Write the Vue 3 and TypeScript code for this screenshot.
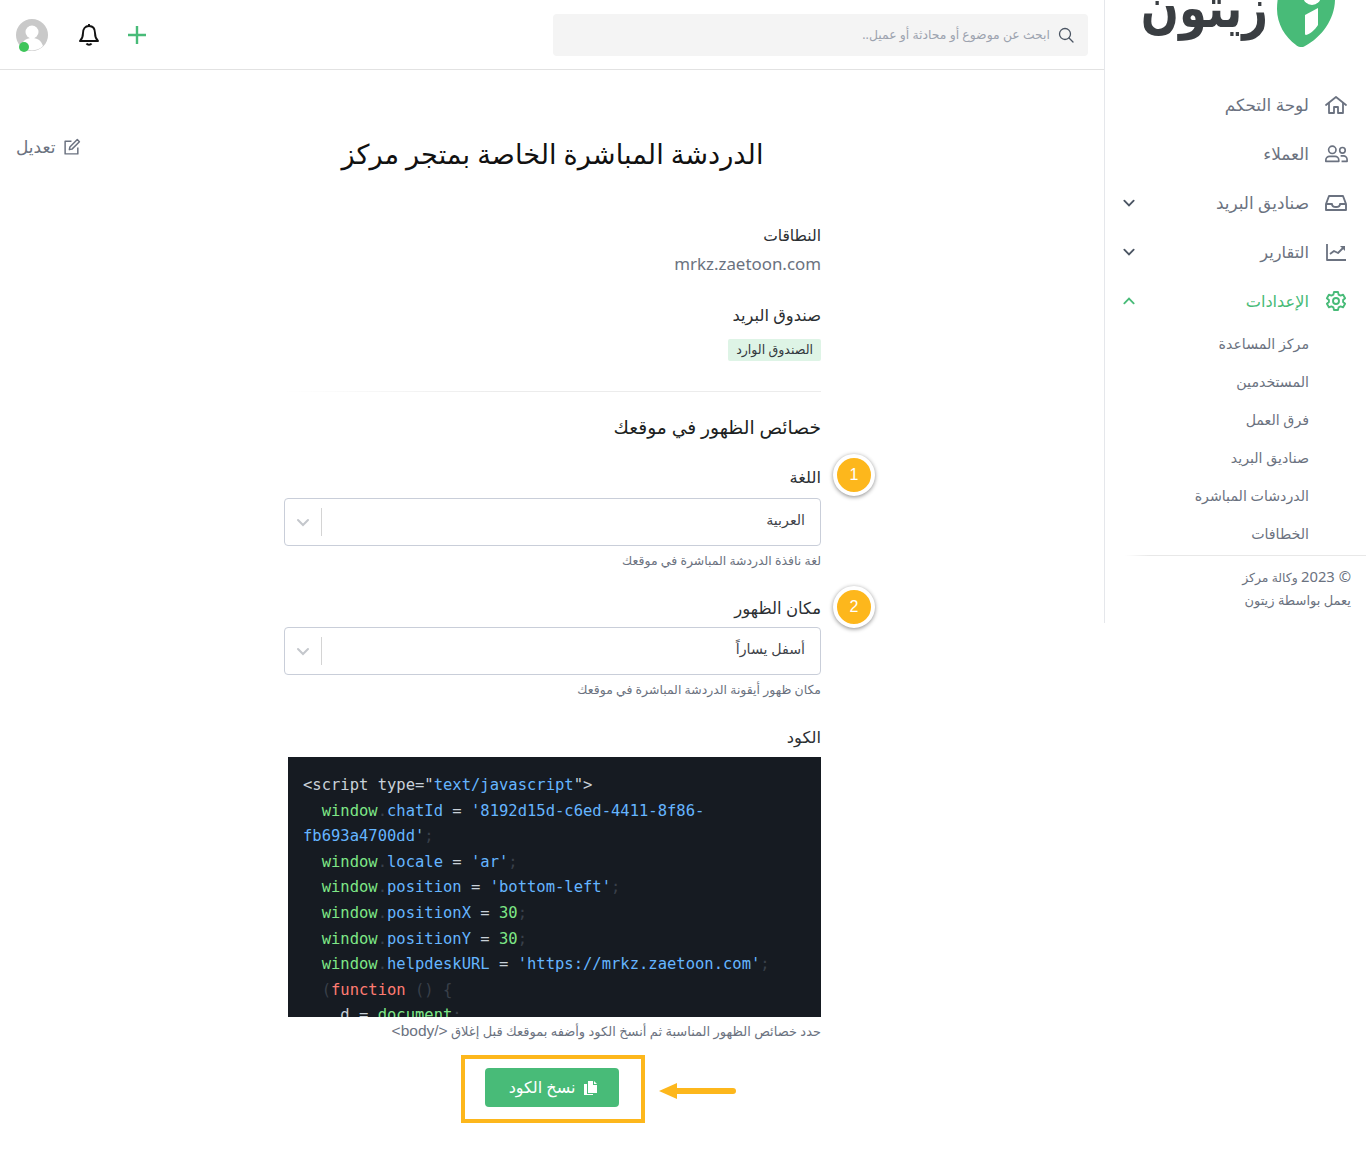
<script setup lang="ts">
type Tok = [string, string]
const code: Tok[][] = [
  [['t', '<script type='], ['w', '"'], ['s', 'text/javascript'], ['w', '"'], ['t', '>']],
  [['t', '  '], ['g', 'window'], ['d', '.'], ['s', 'chatId'], ['t', ' = '], ['s', "'8192d15d-c6ed-4411-8f86-fb693a4700dd'"], ['d', ';']],
  [['t', '  '], ['g', 'window'], ['d', '.'], ['s', 'locale'], ['t', ' = '], ['s', "'ar'"], ['d', ';']],
  [['t', '  '], ['g', 'window'], ['d', '.'], ['s', 'position'], ['t', ' = '], ['s', "'bottom-left'"], ['d', ';']],
  [['t', '  '], ['g', 'window'], ['d', '.'], ['s', 'positionX'], ['t', ' = '], ['g', '30'], ['d', ';']],
  [['t', '  '], ['g', 'window'], ['d', '.'], ['s', 'positionY'], ['t', ' = '], ['g', '30'], ['d', ';']],
  [['t', '  '], ['g', 'window'], ['d', '.'], ['s', 'helpdeskURL'], ['t', ' = '], ['s', "'https://mrkz.zaetoon.com'"], ['d', ';']],
  [['t', '  '], ['d', '('], ['r', 'function'], ['d', ' () {']],
  [['t', '    d = '], ['g', 'document'], ['d', ';']],
]
const subItems = ['مركز المساعدة', 'المستخدمين', 'فرق العمل', 'صناديق البريد', 'الدردشات المباشرة', 'الخطافات']
</script>

<template>
  <div class="page" dir="rtl">
    <aside class="side">
      <div class="logo">
        <svg class="logo-mark" width="58" height="78" viewBox="0 0 58 78">
          <path d="M29 0C45 0 58 13 58 30C58 50 45 68 28 77C25 79 21 78 19 76C8 68 0 55 0 40C0 15 13 0 29 0Z" fill="#48bb78" />
          <path d="M28 46 41 39V56C38 61 33 65 29 66C28 66 28 65 28 64Z" fill="#fff" />
          <circle cx="35" cy="27" r="9" fill="#fff" />
        </svg>
        <span class="logo-text">زيتون</span>
      </div>
      <nav class="nav">
        <a class="nav-item">
          <svg class="ic" viewBox="0 0 24 24" fill="none" stroke="currentColor" stroke-width="1.800" stroke-linejoin="round" stroke-linecap="round"><path d="M2 12 12 4l10 8" /><path d="M5 10v10h5v-6h4v6h5V10" /></svg>
          <span>لوحة التحكم</span>
        </a>
        <a class="nav-item">
          <svg class="ic" viewBox="0 0 26 24" fill="none" stroke="currentColor" stroke-width="1.800" stroke-linejoin="round"><circle cx="9" cy="7.500" r="4" /><path d="M2 20v-1.500c0-2.500 2-4 4-4h6c2 0 4 1.500 4 4V20Z" /><circle cx="20" cy="8" r="3" /><path d="M18 14h3c2 0 4 1.500 4 4v2h-6" /></svg>
          <span>العملاء</span>
        </a>
        <a class="nav-item">
          <svg class="ic" viewBox="0 0 24 24" fill="none" stroke="currentColor" stroke-width="1.900" stroke-linejoin="round"><path d="M5 5h14l3 8v6H2v-6Z" /><path d="M2 13h6c0 2 2 3 4 3s4-1 4-3h6" /></svg>
          <span>صناديق البريد</span>
          <svg class="chev" viewBox="0 0 12 12" fill="none" stroke="currentColor" stroke-width="1.600" stroke-linecap="round"><path d="m2 4 4 4 4-4" /></svg>
        </a>
        <a class="nav-item narrow">
          <svg class="ic" viewBox="0 0 24 24" fill="none" stroke="currentColor" stroke-width="1.800" stroke-linejoin="round"><path d="M3 4v16h19" /><path d="m6 14 4-3 4 2 5-5" /><path d="M16 6h5v5Z" fill="currentColor" stroke="none" /></svg>
          <span>التقارير</span>
          <svg class="chev" viewBox="0 0 12 12" fill="none" stroke="currentColor" stroke-width="1.600" stroke-linecap="round"><path d="m2 4 4 4 4-4" /></svg>
        </a>
        <a class="nav-item narrow active">
          <svg class="ic" viewBox="0 0 24 24" fill="none" stroke="currentColor" stroke-width="1.900" stroke-linejoin="round"><path d="M10 3h4l.6 2.600 2 1 2.500-.9 2 3.500-2 1.800v2l2 1.800-2 3.500-2.500-.9-2 1L14 21h-4l-.6-2.600-2-1-2.500.9-2-3.500 2-1.800v-2l-2-1.800 2-3.500 2.500.9 2-1Z" /><circle cx="12" cy="12" r="3" /></svg>
          <span>الإعدادات</span>
          <svg class="chev" viewBox="0 0 12 12" fill="none" stroke="currentColor" stroke-width="1.600" stroke-linecap="round"><path d="m2 8 4-4 4 4" /></svg>
        </a>
        <div class="sub">
          <a v-for="s in subItems" :key="s" class="sub-item">{{ s }}</a>
        </div>
      </nav>
      <div class="side-foot">
        <div class="foot-1"><span class="year">© 2023</span> وكالة مركز</div>
        <div class="foot-2">يعمل بواسطة زيتون</div>
      </div>
    </aside>

    <main class="main">
      <header class="top">
        <div class="search">
          <svg width="16" height="16" viewBox="0 0 16 16" fill="none" stroke="#4b5563" stroke-width="1.300"><circle cx="7" cy="7" r="5.500" /><path d="m11 11 4 4" stroke-linecap="round" /></svg>
          <span>ابحث عن موضوع أو محادثة أو عميل..</span>
        </div>
        <div class="tools">
          <svg class="plus" width="18" height="18" viewBox="0 0 18 18" stroke="#48bb78" stroke-width="2.400"><path d="M9 0v18M0 9h18" /></svg>
          <svg width="22" height="24" viewBox="0 0 22 24" fill="none" stroke="#111" stroke-width="1.900" stroke-linejoin="round"><path d="M11 3c-4 0-6 3-6 7 0 4-1 6-3 8h18c-2-2-3-4-3-8 0-4-2-7-6-7Z" /><path d="M11 1v2" /><path d="M8.500 20.500c1 1.600 4 1.600 5 0" stroke-width="2" /></svg>
          <div class="avatar">
            <svg width="32" height="32" viewBox="0 0 32 32"><circle cx="16" cy="16" r="16" fill="#c9c9c9" /><circle cx="16" cy="13" r="6.500" fill="#fff" /><path d="M5 27c2-6 6-8 11-8s9 2 11 8a16 16 0 0 1-22 0Z" fill="#fff" /></svg>
            <i class="online"></i>
          </div>
        </div>
      </header>

      <section class="content">
        <div class="head">
          <span></span>
          <h1>الدردشة المباشرة الخاصة بمتجر مركز</h1>
          <a class="edit">
            <svg width="18" height="18" viewBox="0 0 17 17" fill="none" stroke="#6b7280" stroke-width="1.400" stroke-linejoin="round"><path d="M8 3H2v12h12V9" /><path d="m6.500 8.500 7-7 2 2-7 7-2.500.5Z" /></svg>
            <span>تعديل</span>
          </a>
        </div>

        <div class="form">
          <div class="lbl l-domain">النطاقات</div>
          <div class="domain">mrkz.zaetoon.com</div>
          <div class="lbl l-inbox">صندوق البريد</div>
          <div class="badge-row"><span class="tag">الصندوق الوارد</span></div>
          <div class="rule"></div>
          <h2>خصائص الظهور في موقعك</h2>

          <div class="field">
            <div class="lbl">اللغة</div>
            <span class="num">1</span>
            <div class="select"><span>العربية</span><i class="sep"></i><svg width="14" height="14" viewBox="0 0 14 14" fill="none" stroke="#c4c7cc" stroke-width="2" stroke-linecap="round"><path d="m2 5 5 5 5-5" /></svg></div>
            <div class="help">لغة نافذة الدردشة المباشرة في موقعك</div>
          </div>

          <div class="field second">
            <div class="lbl">مكان الظهور</div>
            <span class="num">2</span>
            <div class="select"><span>أسفل يساراً</span><i class="sep"></i><svg width="14" height="14" viewBox="0 0 14 14" fill="none" stroke="#c4c7cc" stroke-width="2" stroke-linecap="round"><path d="m2 5 5 5 5-5" /></svg></div>
            <div class="help">مكان ظهور أيقونة الدردشة المباشرة في موقعك</div>
          </div>

          <div class="lbl l-code">الكود</div>
          <div class="code-wrap"><pre class="code" dir="ltr"><code><span v-for="(line, i) in code" :key="i" class="ln"><span v-for="(t, j) in line" :key="j" :class="t[0]">{{ t[1] }}</span></span></code></pre></div>
          <div class="help code-help">حدد خصائص الظهور المناسبة ثم أنسخ الكود وأضفه بموقعك قبل إغلاق <span class="tagname">&lt;/body&gt;</span></div>

          <div class="actions">
            <div class="frame">
              <button class="copy">
                <svg width="15" height="16" viewBox="0 0 15 16" fill="#fff"><path d="M5 1h5v4h4v8H5Z" /><path d="M11 1l3 3h-3Z" /><path d="M1 4h3v10h6v1H1Z" /></svg>
                <span>نسخ الكود</span>
              </button>
              <svg class="arrow" width="78" height="18" viewBox="0 0 78 18"><path d="M0 9 18 1v5h56a3 3 0 0 1 0 6H18v5Z" fill="#fdb71c" /></svg>
            </div>
          </div>
        </div>
      </section>
    </main>
  </div>
</template>

<style>
html, body { margin: 0; background: #fff; }
body { height: 1149px; overflow: hidden; }
</style>

<style scoped>
.page {
  display: flex;
  align-items: flex-start;
  width: 1366px;
  height: 1149px;
  overflow: hidden;
  font-family: "Noto Sans", "DejaVu Sans", sans-serif;
  color: #1f2933;
}
.side {
  box-sizing: border-box;
  flex: 0 0 262px;
  height: 623px;
  border-left: 1px solid #e5e7eb;
  overflow: hidden;
}
.logo {
  display: flex;
  align-items: flex-end;
  height: 47px;
  padding-right: 31px;
  gap: 9px;
  overflow: hidden;
}
.logo-mark { flex: none; margin-top: -31px; }
.logo-text {
  display: block;
  font-size: 56px;
  line-height: 56px;
  font-weight: 700;
  color: #3a3e42;
  white-space: nowrap;
  transform: scaleX(.8);
  transform-origin: right center;
  margin-bottom: 14px;
}
.nav { margin-top: 33px; }
.nav-item {
  display: flex;
  align-items: center;
  height: 49px;
  padding-right: 18px;
  color: #6b7280;
  font-size: 16.900px;
}
.nav-item.narrow { font-size: 16.200px; }
.nav-item span { margin-right: 15px; }
.nav-item.active { color: #48bb78; }
.ic { width: 24px; height: 24px; flex: none; }
.chev { width: 14px; height: 14px; margin-right: auto; margin-left: 17px; color: #4b5563; }
.active .chev { color: #48bb78; }
.sub { margin-top: -1px; }
.sub-item {
  display: flex;
  align-items: center;
  height: 38px;
  padding-right: 57px;
  font-size: 14.200px;
  color: #6b7280;
}
.side-foot {
  padding: 9px 15px 0 0;
  font-size: 12.400px;
  color: #6b7280;
  margin-top: 3px;
  margin-left: 20px;
  background: linear-gradient(to left, #e8e8e8, #e8e8e8 90%, #fff) top / 100% 1px no-repeat;
}
.year { font-size: 14.800px; }
.foot-1 { line-height: 24px; }
.foot-2 { line-height: 24px; font-size: 13px; margin-top: -2px; }
.main { flex: 1; min-width: 0; }
.top {
  box-sizing: border-box;
  display: flex;
  align-items: center;
  justify-content: space-between;
  height: 70px;
  border-bottom: 1px solid #e2e2e2;
  padding: 1px 16px 0 16px;
}
.search {
  box-sizing: border-box;
  display: flex;
  align-items: center;
  gap: 8px;
  width: 535px;
  height: 42px;
  background: #f4f4f4;
  border-radius: 4px;
  padding-right: 14px;
  font-size: 12.400px;
  color: #9ca3af;
}
.search span { margin-bottom: 2px; }
.tools { display: flex; align-items: center; gap: 30px; }
.plus { margin-left: -2px; }
.avatar { position: relative; width: 32px; height: 32px; }
.avatar svg { display: block; }
.online {
  position: absolute;
  left: 3px;
  bottom: -1px;
  width: 10px;
  height: 10px;
  border-radius: 50%;
  background: #3ec55a;
}
.content { padding: 0 15px 0 16px; }
.head {
  display: grid;
  grid-template-columns: 1fr auto 1fr;
  align-items: start;
  margin-top: 60px;
}
h1 {
  margin: 0;
  font-size: 27.200px;
  line-height: 48px;
  font-weight: 400;
  color: #111;
  white-space: nowrap;
}
.edit {
  display: flex;
  align-items: center;
  gap: 8px;
  justify-self: end;
  color: #6b7280;
  font-size: 17px;
  line-height: 34px;
}
.form { width: 537px; margin: 45px auto 0; }
.lbl { font-size: 16.300px; line-height: 24px; color: #2b2f33; }
.l-domain { font-size: 15.500px; }
.domain { font-size: 16.900px; line-height: 24px; margin-top: 5px; color: #6b7280; }
.l-inbox { margin-top: 27px; }
.badge-row { margin-top: 10px; }
.tag {
  display: inline-block;
  padding: 0 8px;
  height: 22px;
  line-height: 22px;
  border-radius: 2px;
  font-size: 12.600px;
  background: #def4e6;
  color: #33383d;
}
.rule {
  height: 1px;
  margin-top: 30px;
  background: linear-gradient(to left, #ececec, #ececec 60%, #fff);
}
h2 {
  margin: 22px 0 0;
  font-size: 18.700px;
  line-height: 26px;
  font-weight: 400;
  color: #1c1f22;
}
.field { position: relative; margin-top: 25px; }
.field.second { margin-top: 25px; }
.second .lbl { font-size: 16.500px; }
.num {
  position: absolute;
  top: -11px;
  right: -54px;
  box-sizing: content-box;
  width: 34px;
  height: 34px;
  text-align: center;
  border: 4px solid #fff;
  border-radius: 50%;
  background: #fdb71c;
  color: #fff;
  font: 16px/34px "Liberation Sans", sans-serif;
  box-shadow: 0 1px 4px rgba(0, 0, 0, .45);
}
.second .num { top: -10px; }
.select {
  box-sizing: border-box;
  display: flex;
  align-items: center;
  height: 48px;
  margin-top: 9px;
  padding: 0 15px 0 11px;
  border: 1px solid #c9ced9;
  border-radius: 4px;
  font-size: 14.200px;
  color: #3f444a;
}
.select span { margin-bottom: 5px; }
.second .select { margin-top: 7px; }
.sep { width: 1px; height: 28px; background: #d4d4d4; margin-right: auto; margin-left: 11px; }
.help { margin-top: 5px; font-size: 12.450px; line-height: 20px; color: #6b7280; }
.l-code { margin-top: 25px; }
.code-wrap {
  box-sizing: border-box;
  height: 260px;
  margin-top: 8px;
  width: 533px;
  overflow: hidden;
  background: #161b22;
}
.code {
  margin: 0;
  padding: 16px 15px 0;
  font: 15.500px/25.600px "DejaVu Sans Mono", monospace;
  white-space: pre-wrap;
  color: #c9d1d9;
}
.ln { display: block; }
.t { color: #c9d1d9; }
.w { color: #c9d1d9; }
.g { color: #7ee787; }
.s { color: #65b5ff; }
.d { color: #39404a; }
.r { color: #ff7b72; }
.code-help { margin-top: 4px; font-size: 13px; }
.tagname { font: 15.500px "Liberation Sans", sans-serif; }
.actions { display: flex; justify-content: center; margin-top: 14px; }
.frame {
  position: relative;
  box-sizing: border-box;
  display: flex;
  justify-content: center;
  align-items: center;
  width: 184px;
  height: 68px;
  padding: 0 2px 3px 0;
  border: 4px solid #fdb71c;
}
.copy {
  display: flex;
  align-items: center;
  justify-content: center;
  gap: 8px;
  width: 134px;
  height: 39px;
  border: 0;
  border-radius: 4px;
  padding: 0 0 0 4px;
  background: #48bb78;
  color: #fff;
  font: 16px "Noto Sans", "DejaVu Sans", sans-serif;
}
.copy span { margin-bottom: 2px; }
.arrow { position: absolute; top: 23px; left: 194px; }
</style>
